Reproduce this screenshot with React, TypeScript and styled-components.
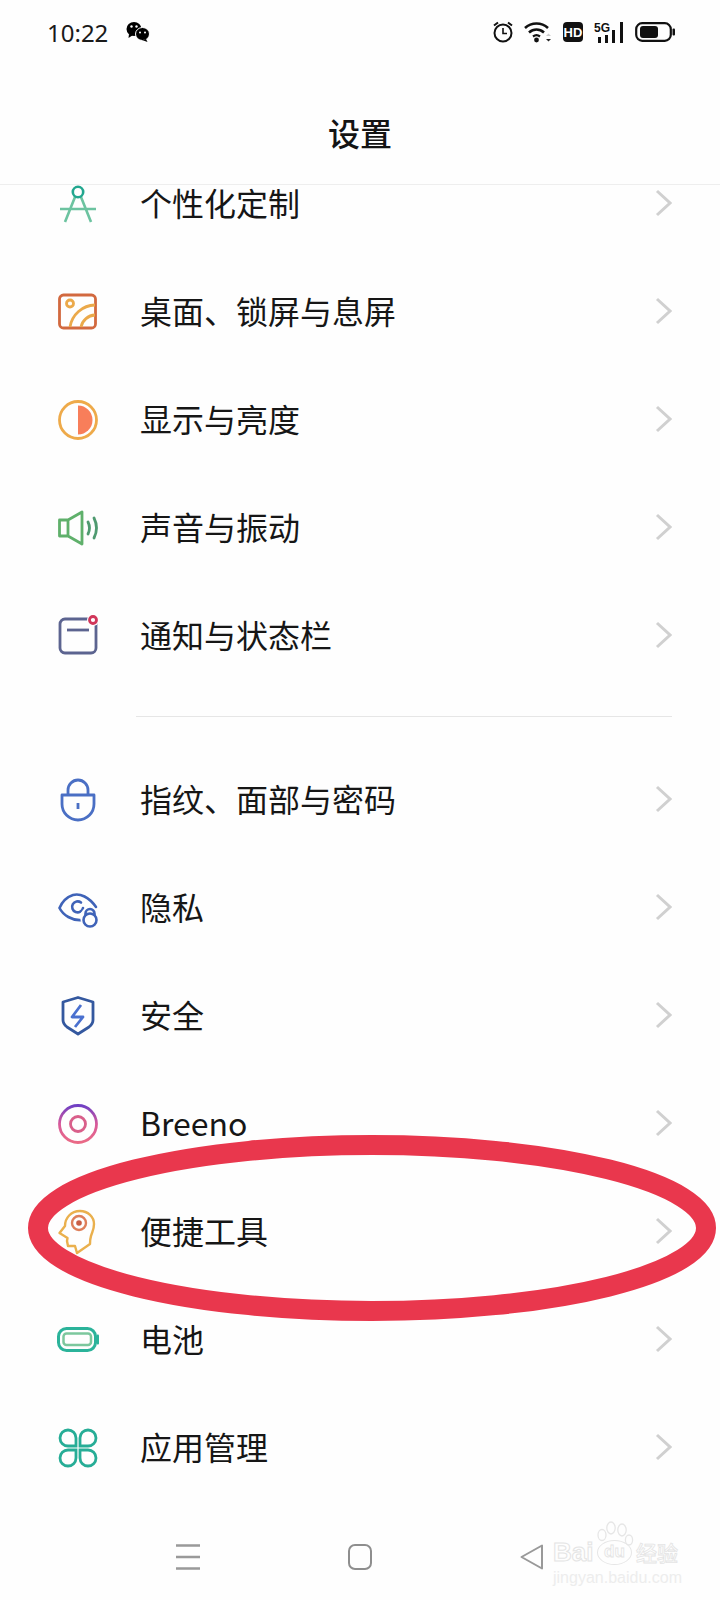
import React, { ReactElement } from 'react';
import styled, { createGlobalStyle } from 'styled-components';

const GlobalStyle = createGlobalStyle`
  html, body {
    margin: 0;
    padding: 0;
    background: #fff;
  }
  * {
    box-sizing: border-box;
  }
`;

const Screen = styled.div`
  position: relative;
  width: 720px;
  height: 1600px;
  overflow: hidden;
  display: flex;
  flex-direction: column;
  background: #fefefe;
  color: #111;
  font-family: "Noto Sans CJK SC", "Noto Sans", sans-serif;
`;

const StatusBar = styled.div`
  height: 64px;
  flex: none;
  display: flex;
  align-items: center;
  padding: 0 45px 0 47px;
`;

const Clock = styled.span`
  font-family: "Noto Sans", sans-serif;
  font-size: 24px;
  color: #1a1a1a;
  width: 79px;
`;

const StatusIcons = styled.div`
  margin-left: auto;
  display: flex;
  align-items: center;
  gap: 11px;
`;

const HdBadge = styled.span`
  width: 20px;
  height: 20px;
  border-radius: 4px;
  background: #111;
  color: #fff;
  font-family: "Liberation Sans", sans-serif;
  font-size: 13px;
  font-weight: 700;
  display: flex;
  align-items: center;
  justify-content: center;
`;

const Header = styled.header`
  height: 121px;
  flex: none;
  padding-top: 16px;
  display: flex;
  align-items: center;
  justify-content: center;
  border-bottom: 1px solid #eeeeee;
`;

const Title = styled.h1`
  margin: 0;
  font-size: 32px;
  font-weight: 500;
  letter-spacing: 0;
  color: #141414;
`;

const List = styled.main`
  flex: 1;
`;

const Scroller = styled.div`
  margin-top: -35px;
`;

const Row = styled.div`
  height: 108px;
  display: flex;
  align-items: center;
  padding: 0 48px 0 58px;
`;

const IconSlot = styled.div`
  width: 40px;
  height: 40px;
  flex: none;
  margin-right: 42px;
  svg {
    display: block;
    overflow: visible;
  }
`;

const Label = styled.span`
  flex: 1;
  font-size: 32px;
  line-height: 32px;
  padding-bottom: 5px;
  color: #161616;
`;

const ChevronMark = styled.svg`
  flex: none;
  margin-bottom: 2px;
`;

const Divider = styled.div`
  height: 1px;
  margin: 26px 48px 29px 136px;
  background: #e6e6e6;
`;

const NavBar = styled.nav`
  height: 99px;
  flex: none;
  display: flex;
  align-items: flex-start;
  padding: 42px 0 0 176px;
  gap: 148px;
`;

const Oval = styled.svg`
  position: absolute;
  left: 0;
  top: 1120px;
  pointer-events: none;
`;

const Watermark = styled.div`
  position: absolute;
  left: 553px;
  top: 1521px;
  width: 130px;
  font-family: "Liberation Sans", sans-serif;
`;

const PawToes = styled.svg`
  display: block;
  margin: 0 0 -8px 43px;
`;

const WatermarkBrand = styled.div`
  display: flex;
  align-items: center;
  height: 26px;
  white-space: nowrap;
  color: transparent;
  -webkit-text-stroke: 1px #e4e4e4;
`;

const BrandWord = styled.span`
  width: 44px;
  font-size: 26px;
  font-weight: 700;
`;

const BrandDu = styled.span`
  width: 35px;
  height: 25px;
  border: 1.5px solid #e6e6e6;
  border-radius: 50%;
  font-size: 17px;
  font-weight: 700;
  display: flex;
  align-items: center;
  justify-content: center;
  -webkit-text-stroke: 0.8px #e4e4e4;
`;

const BrandCn = styled.span`
  margin-left: 4px;
  font-family: "Noto Sans CJK SC", sans-serif;
  font-size: 21px;
  font-weight: 500;
  -webkit-text-stroke: 0.8px #e4e4e4;
`;

const WatermarkUrl = styled.div`
  margin-top: 4px;
  font-size: 16px;
  line-height: 18px;
  white-space: nowrap;
  color: #ededed;
`;

const Wechat = () => (
  <svg width="24" height="22" viewBox="0 0 24 22">
    <ellipse cx="8" cy="8" rx="7.5" ry="7" fill="#000" />
    <path d="M3 13 L2.5 17 L7 14 Z" fill="#000" />
    <ellipse cx="16.5" cy="13" rx="7" ry="6.5" fill="#000" stroke="#fff" strokeWidth="1" />
    <path d="M20 18 L21.5 21 L16 19 Z" fill="#000" />
    <circle cx="5.5" cy="5.5" r="1.2" fill="#fff" />
    <circle cx="10.5" cy="5.5" r="1.2" fill="#fff" />
    <circle cx="14" cy="11.5" r="1" fill="#fff" />
    <circle cx="19" cy="11.5" r="1" fill="#fff" />
  </svg>
);

const AlarmIcon = () => (
  <svg width="20" height="22" viewBox="0 0 20 22" fill="none" stroke="#111" strokeWidth="2">
    <circle cx="10" cy="12" r="8.5" />
    <path d="M10 7 V12.5 H14" strokeWidth="1.6" />
    <path d="M1 4.5 L5 1.5 M19 4.5 L15 1.5" />
  </svg>
);

const WifiIcon = () => (
  <svg width="28" height="22" viewBox="0 0 28 22" fill="none" stroke="#111" strokeWidth="2.6">
    <path d="M1 7 C7.5 1 17.5 1 24 7" />
    <path d="M5 11.5 C9.5 7.5 15.5 7.5 20 11.5" />
    <path d="M9 15.5 C11 14 14 14 16 15.5" strokeWidth="2.2" />
    <circle cx="12.5" cy="19" r="2.4" fill="#111" stroke="none" />
    <path d="M22 15 L24.5 12.5 L27 15 Z" fill="#ccc" stroke="none" />
    <path d="M22 18 L24.5 20.5 L27 18 Z" fill="#222" stroke="none" />
  </svg>
);

const SignalIcon = () => (
  <svg width="30" height="22" viewBox="0 0 30 22">
    <text x="0" y="10.5" fontFamily="'Liberation Sans', sans-serif" fontSize="12" fontWeight="700" fill="#111">5G</text>
    <rect x="4" y="16" width="3" height="6" fill="#111" />
    <rect x="11" y="14" width="3" height="8" fill="#111" />
    <rect x="18" y="9" width="3" height="13" fill="#111" />
    <rect x="26" y="1" width="3" height="21" fill="#111" />
  </svg>
);

const BatteryIcon = () => (
  <svg width="40" height="20" viewBox="0 0 40 20" fill="none">
    <rect x="1.2" y="1.2" width="34.6" height="17.6" rx="6" stroke="#111" strokeWidth="2.2" />
    <rect x="5" y="4" width="18" height="12" rx="3" fill="#111" />
    <rect x="37.5" y="6.5" width="2.5" height="7" rx="1" fill="#111" />
  </svg>
);

const CompassIcon = () => (
  <svg width="40" height="40" viewBox="0 0 40 40" fill="none" strokeWidth="2.6">
    <path d="M17 13 L7 38 M23 13 L33 38 M2 25 H38" stroke="#6cc3a0" />
    <circle cx="20" cy="8" r="5.2" stroke="#22a78f" />
  </svg>
);

const WallpaperIcon = () => (
  <svg width="40" height="40" viewBox="0 0 40 40" fill="none" strokeWidth="2.8">
    <rect x="1.5" y="3" width="36" height="33" rx="4" stroke="#d2693f" />
    <circle cx="12" cy="11.5" r="3.5" stroke="#eba94a" />
    <path d="M12 35 A26 26 0 0 1 37 13 M23 35 A15 15 0 0 1 37 23" stroke="#eba94a" />
  </svg>
);

const DisplayIcon = () => (
  <svg width="40" height="40" viewBox="0 0 40 40" fill="none">
    <circle cx="20" cy="20" r="18.5" stroke="#eeaa4a" strokeWidth="2.8" />
    <path d="M20 5.5 A14.5 14.5 0 0 1 20 34.5 Z" fill="#f87e5a" />
  </svg>
);

const SoundIcon = () => (
  <svg width="40" height="40" viewBox="0 0 40 40" fill="none" strokeWidth="2.8" strokeLinejoin="round" strokeLinecap="round">
    <path d="M1.5 12 H10 L24 4 V36 L10 28 H1.5 Z M10 12 V28" stroke="#5fb06b" />
    <path d="M30 14 Q33 20 30 26 M36 10 Q41 20 36 30" stroke="#4f9a70" />
  </svg>
);

const NotifyIcon = () => (
  <svg width="40" height="40" viewBox="0 0 40 40" fill="none" strokeWidth="2.8">
    <rect x="2" y="3" width="36" height="34" rx="5" stroke="#5c6490" />
    <path d="M9 14 H31" stroke="#5c6490" />
    <circle cx="35" cy="4" r="6" fill="#fff" stroke="none" />
    <circle cx="35" cy="4" r="3.5" stroke="#d1365a" />
  </svg>
);

const LockIcon = () => (
  <svg width="40" height="40" viewBox="0 0 40 40" fill="none" stroke="#4a6fc4" strokeWidth="2.8">
    <path d="M10 15 V10 a10 10 0 0 1 20 0 V15" />
    <path d="M4 15 H36 V24 a16 16 0 0 1 -32 0 Z" strokeLinejoin="round" />
    <path d="M20 23 V29" />
  </svg>
);

const EyeIcon = () => (
  <svg width="40" height="40" viewBox="0 0 40 40" fill="none" stroke="#3f63b8" strokeWidth="2.6">
    <path d="M38 19 C31 9 22 5 15 7 C9 9 4 14 1.5 20 C5 27 14 33 24 32" strokeLinecap="round" />
    <path d="M23 14.5 A5.5 5.5 0 1 0 25 20" strokeLinecap="round" />
    <circle cx="32" cy="29" r="10" fill="#fefefe" stroke="none" />
    <circle cx="32" cy="32" r="6.5" />
    <path d="M27.5 27 V25.5 a4.5 4.5 0 0 1 9 0 V27" />
  </svg>
);

const ShieldIcon = () => (
  <svg width="40" height="40" viewBox="0 0 40 40" fill="none" strokeWidth="2.8" strokeLinejoin="round">
    <path d="M20 1.5 L35 6 V24 Q35 28 31 31 L20 38 L9 31 Q5 28 5 24 V6 Z" stroke="#34589f" />
    <path d="M23 9 L14 21 H25 L17 31" stroke="#4a70cf" />
  </svg>
);

const BreenoIcon = () => (
  <svg width="40" height="40" viewBox="0 0 40 40" fill="none" strokeWidth="2.8">
    <defs>
      <linearGradient id="breenoGrad" x1="0" y1="0" x2="0" y2="1">
        <stop offset="0" stopColor="#6f3fc4" />
        <stop offset="0.5" stopColor="#d85a9a" />
        <stop offset="1" stopColor="#ea6a86" />
      </linearGradient>
    </defs>
    <circle cx="20" cy="20" r="18.5" stroke="url(#breenoGrad)" />
    <circle cx="20" cy="20" r="7.5" stroke="#d95f8a" />
  </svg>
);

const HeadIcon = () => (
  <svg width="40" height="40" viewBox="0 0 40 40" fill="none" strokeWidth="2.4" strokeLinejoin="round">
    <path
      d="M22 -1 C30 -1 36 5 36 12 C36 18 34 20 33 24 C32 27 32 29 32 32 L19 41 L17 34 L10 34 L9 29 L9.5 26 L1.5 21 L7 14 C7 6 13 -1 22 -1 Z"
      stroke="#eab04d"
    />
    <circle cx="21" cy="11" r="7" stroke="#de7f5a" />
    <circle cx="21" cy="11" r="2.8" fill="#c95e45" />
  </svg>
);

const BatteryRowIcon = () => (
  <svg width="40" height="40" viewBox="0 0 40 40" fill="none">
    <rect x="0.5" y="8.5" width="37" height="22" rx="8" stroke="#2bb39a" strokeWidth="3" />
    <rect x="5.5" y="13.5" width="27.5" height="11.5" rx="3" stroke="#7cc79d" strokeWidth="2.5" />
    <rect x="38.5" y="14.5" width="2.5" height="10" rx="1" fill="#2bb39a" />
  </svg>
);

const AppsIcon = () => (
  <svg width="40" height="40" viewBox="0 0 40 40" fill="none" stroke="#26ad96" strokeWidth="2.8">
    <path d="M18 18 H10 a8 8 0 1 1 8 -8 Z" />
    <path d="M22 18 V10 a8 8 0 1 1 8 8 Z" />
    <path d="M18 22 V30 a8 8 0 1 1 -8 -8 Z" />
    <path d="M22 22 H30 a8 8 0 1 1 -8 8 Z" />
  </svg>
);

const Chevron = () => (
  <ChevronMark width="17" height="28" viewBox="0 0 17 28" fill="none" stroke="#d0d0d0" strokeWidth="3">
    <path d="M2 2 L15 14 L2 26" />
  </ChevronMark>
);

type Item = { label: string; icon: ReactElement };

const firstGroup: Item[] = [
  { label: '个性化定制', icon: <CompassIcon /> },
  { label: '桌面、锁屏与息屏', icon: <WallpaperIcon /> },
  { label: '显示与亮度', icon: <DisplayIcon /> },
  { label: '声音与振动', icon: <SoundIcon /> },
  { label: '通知与状态栏', icon: <NotifyIcon /> },
];

const secondGroup: Item[] = [
  { label: '指纹、面部与密码', icon: <LockIcon /> },
  { label: '隐私', icon: <EyeIcon /> },
  { label: '安全', icon: <ShieldIcon /> },
  { label: 'Breeno', icon: <BreenoIcon /> },
  { label: '便捷工具', icon: <HeadIcon /> },
  { label: '电池', icon: <BatteryRowIcon /> },
  { label: '应用管理', icon: <AppsIcon /> },
];

const renderRow = (item: Item) => (
  <Row key={item.label}>
    <IconSlot>{item.icon}</IconSlot>
    <Label>{item.label}</Label>
    <Chevron />
  </Row>
);

const App = () => (
  <Screen>
    <GlobalStyle />
    <StatusBar>
      <Clock>10:22</Clock>
      <Wechat />
      <StatusIcons>
        <AlarmIcon />
        <WifiIcon />
        <HdBadge>HD</HdBadge>
        <SignalIcon />
        <BatteryIcon />
      </StatusIcons>
    </StatusBar>
    <Header>
      <Title>设置</Title>
    </Header>
    <List>
      <Scroller>
        {firstGroup.map(renderRow)}
        <Divider />
        {secondGroup.map(renderRow)}
      </Scroller>
    </List>
    <NavBar>
      <svg width="24" height="26" viewBox="0 0 24 26" stroke="#999" strokeWidth="2.4">
        <path d="M0 1.5 H24 M0 13 H24 M0 24.5 H24" />
      </svg>
      <svg width="24" height="26" viewBox="0 0 24 26" fill="none" stroke="#8e8e8e" strokeWidth="2">
        <rect x="1" y="1" width="22" height="24" rx="6" />
      </svg>
      <svg width="24" height="26" viewBox="0 0 24 26" fill="none" stroke="#999" strokeWidth="2" strokeLinejoin="round">
        <path d="M22 1.5 V24.5 L1.5 13 Z" />
      </svg>
    </NavBar>
    <Oval width="720" height="220" viewBox="0 0 720 220" fill="none">
      <ellipse cx="372" cy="108" rx="334" ry="83" stroke="#e9374d" strokeWidth="20" />
    </Oval>
    <Watermark>
      <PawToes width="40" height="26" viewBox="0 0 40 26" fill="none" stroke="#e6e6e6" strokeWidth="1.3">
        <ellipse cx="6" cy="14" rx="4" ry="5.5" />
        <ellipse cx="15" cy="7" rx="4.2" ry="6" />
        <ellipse cx="26" cy="9" rx="4.2" ry="6" />
        <ellipse cx="33" cy="19" rx="3.6" ry="5" />
      </PawToes>
      <WatermarkBrand>
        <BrandWord>Bai</BrandWord>
        <BrandDu>du</BrandDu>
        <BrandCn>经验</BrandCn>
      </WatermarkBrand>
      <WatermarkUrl>jingyan.baidu.com</WatermarkUrl>
    </Watermark>
  </Screen>
);

export default App;
